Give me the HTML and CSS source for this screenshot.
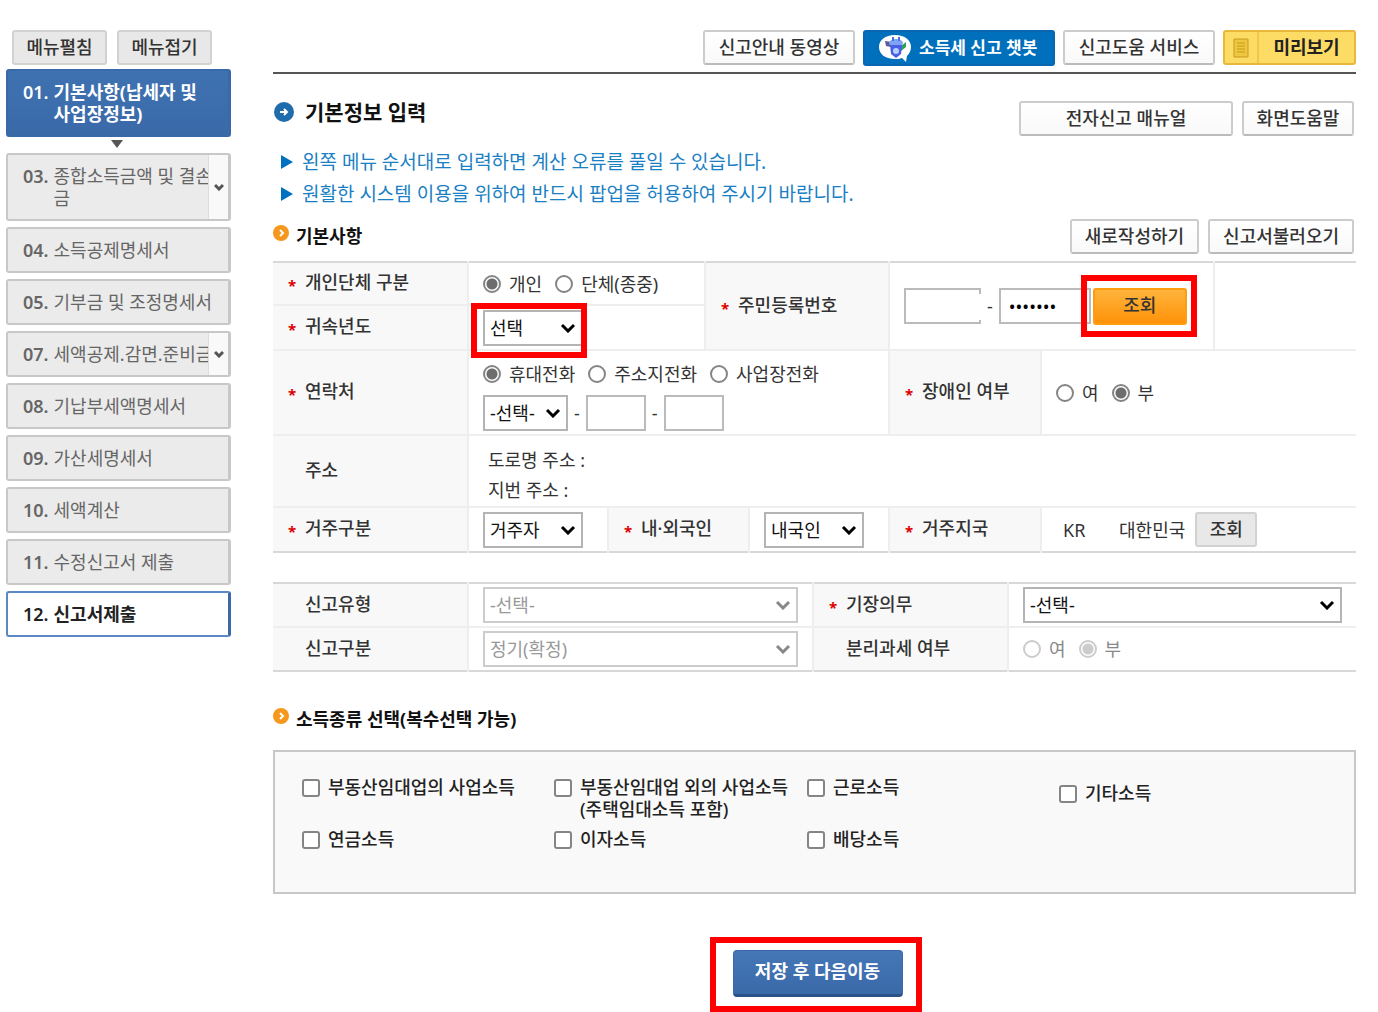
FILE: index.html
```html
<!DOCTYPE html>
<html lang="ko">
<head>
<meta charset="utf-8">
<meta name="viewport" content="width=device-width, initial-scale=1">
<title>기본정보 입력</title>
<link rel="stylesheet" href="styles.css">
</head>
<body>
<div class="page">
  <nav class="side" aria-label="신고 메뉴">
    <div class="side-tools">
      <button type="button" class="btn btn-flat">메뉴펼침</button>
      <button type="button" class="btn btn-flat">메뉴접기</button>
    </div>
    <a href="#" class="step step-current"><b>01.</b><span class="step-name">기본사항(납세자 및<br>사업장정보)</span></a>
    <svg class="step-arrow" viewBox="0 0 12 8" aria-hidden="true"><path d="M0 0h12L6 8z"/></svg>
    <ul class="steps">
      <li><a href="#" class="step step-tall"><b>03.</b><span class="step-name">종합소득금액 및 결손<br>금</span><span class="step-more"><svg viewBox="0 0 10 8" aria-hidden="true"><path d="M1 2l4 4 4-4"/></svg></span></a></li>
      <li><a href="#" class="step"><b>04.</b><span class="step-name">소득공제명세서</span></a></li>
      <li><a href="#" class="step"><b>05.</b><span class="step-name">기부금 및 조정명세서</span></a></li>
      <li><a href="#" class="step"><b>07.</b><span class="step-name">세액공제.감면.준비금</span><span class="step-more"><svg viewBox="0 0 10 8" aria-hidden="true"><path d="M1 2l4 4 4-4"/></svg></span></a></li>
      <li><a href="#" class="step"><b>08.</b><span class="step-name">기납부세액명세서</span></a></li>
      <li><a href="#" class="step"><b>09.</b><span class="step-name">가산세명세서</span></a></li>
      <li><a href="#" class="step"><b>10.</b><span class="step-name">세액계산</span></a></li>
      <li><a href="#" class="step"><b>11.</b><span class="step-name">수정신고서 제출</span></a></li>
      <li><a href="#" class="step step-last"><b>12.</b><span class="step-name">신고서제출</span></a></li>
    </ul>
  </nav>

  <main class="main">
    <header class="topbar">
      <button type="button" class="btn btn-top">신고안내 동영상</button>
      <button type="button" class="btn btn-bot">
        <svg class="bot" viewBox="0 0 36 32" aria-hidden="true">
          <path fill="#fff" d="M18 3c10 0 16 5 16 12 0 4-2 7-4 9l-1 6-4-4c-2 1-4 1-7 1C8 27 2 22 2 15S8 3 18 3z"/>
          <path fill="#5a5a9c" d="M8 9l7 1-1 5-5-1z"/>
          <path fill="#2e9e5b" d="M29 10l-6 5 1 4 5-4z"/>
          <ellipse cx="19" cy="11" rx="7" ry="4" fill="#7fa4f4"/>
          <path fill="#4a5fe8" d="M13 13h12l-1 9-5 4-5-4z"/>
          <circle cx="19" cy="19" r="3" fill="#b5d0ff"/>
          <path stroke="#4a6fe1" stroke-width="2" d="M16 9V5M22 9V5"/>
        </svg>
        <span>소득세 신고 챗봇</span>
      </button>
      <button type="button" class="btn btn-top">신고도움 서비스</button>
      <button type="button" class="btn btn-preview">
        <span class="preview-icon"><svg viewBox="0 0 16 20" aria-hidden="true"><path d="M1 1h14v18H1zM4 5h8M4 8h8M4 11h8M4 14h8"/></svg></span>
        <span class="preview-text">미리보기</span>
      </button>
    </header>

    <div class="title-row">
      <h1 class="title"><svg class="title-icon" viewBox="0 0 22 22" aria-hidden="true"><circle cx="11" cy="11" r="10"/><path d="M7 11h7M11 8l3 3-3 3"/></svg>기본정보 입력</h1>
      <div class="actions">
        <button type="button" class="btn btn-manual">전자신고 매뉴얼</button>
        <button type="button" class="btn btn-help">화면도움말</button>
      </div>
    </div>

    <ul class="notes">
      <li><svg viewBox="0 0 12 14" aria-hidden="true"><path d="M0 0l12 7-12 7z"/></svg>왼쪽 메뉴 순서대로 입력하면 계산 오류를 풀일 수 있습니다.</li>
      <li><svg viewBox="0 0 12 14" aria-hidden="true"><path d="M0 0l12 7-12 7z"/></svg>원활한 시스템 이용을 위하여 반드시 팝업을 허용하여 주시기 바랍니다.</li>
    </ul>

    <div class="section-row">
      <h2 class="section"><svg class="dot" viewBox="0 0 16 16" aria-hidden="true"><circle cx="8" cy="8" r="8"/><path d="M7 5l3 3-3 3"/></svg>기본사항</h2>
      <div class="actions">
        <button type="button" class="btn btn-wide">새로작성하기</button>
        <button type="button" class="btn btn-wide">신고서불러오기</button>
      </div>
    </div>

    <table class="form">
      <colgroup><col class="c195"><col class="c140"><col class="c97"><col class="c44"><col class="c140"><col class="c152"><col class="c173"><col></colgroup>
      <tr class="r43">
        <th scope="row" class="req">개인단체 구분</th>
        <td colspan="2"><div class="line">
          <label class="opt"><input type="radio" name="kind" checked>개인</label>
          <label class="opt"><input type="radio" name="kind">단체(종중)</label></div></td>
        <th scope="row" class="req" colspan="2" rowspan="2">주민등록번호</th>
        <td colspan="2" rowspan="2"><div class="line line-id">
          <span class="open-box"><input type="text" class="box" aria-label="주민등록번호 앞자리"></span>
          <span class="dash">-</span>
          <input type="password" class="box box-pw" value="0000000" aria-label="주민등록번호 뒷자리">
          <span class="mark mark-search"><button type="button" class="btn btn-orange">조회</button></span></div></td>
        <td rowspan="2"></td>
      </tr>
      <tr class="r45">
        <th scope="row" class="req"><label for="year">귀속년도</label></th>
        <td colspan="2"><span class="mark mark-year"><select id="year" class="sel w100"><option>선택</option></select></span></td>
      </tr>
      <tr class="r85">
        <th scope="row" class="req">연락처</th>
        <td colspan="4"><div class="stack">
          <div class="line">
            <label class="opt"><input type="radio" name="tel" checked>휴대전화</label>
            <label class="opt"><input type="radio" name="tel">주소지전화</label>
            <label class="opt"><input type="radio" name="tel">사업장전화</label>
          </div>
          <div class="line line-tel">
            <select class="sel w85" aria-label="전화 앞자리"><option>-선택-</option></select><span class="dash">-</span>
            <input type="text" class="box box-tel" aria-label="전화 가운데자리"><span class="dash">-</span>
            <input type="text" class="box box-tel" aria-label="전화 끝자리">
          </div></div></td>
        <th scope="row" class="req">장애인 여부</th>
        <td colspan="2"><div class="line">
          <label class="opt"><input type="radio" name="dis">여</label>
          <label class="opt"><input type="radio" name="dis" checked>부</label></div></td>
      </tr>
      <tr class="r72">
        <th scope="row">주소</th>
        <td colspan="7" class="address">도로명 주소 :<br>지번 주소 :</td>
      </tr>
      <tr class="r45">
        <th scope="row" class="req"><label for="resident">거주구분</label></th>
        <td><select id="resident" class="sel w100"><option>거주자</option></select></td>
        <th scope="row" class="req" colspan="2"><label for="national">내·외국인</label></th>
        <td><select id="national" class="sel w100"><option>내국인</option></select></td>
        <th scope="row" class="req">거주지국</th>
        <td colspan="2"><div class="line country"><span class="code">KR</span><span class="nation">대한민국</span><button type="button" class="btn btn-flat btn-small">조회</button></div></td>
      </tr>
    </table>

    <table class="form form-type">
      <colgroup><col class="c195"><col class="c345"><col class="c195"><col></colgroup>
      <tr class="r44">
        <th scope="row"><label for="rtype">신고유형</label></th>
        <td><select id="rtype" class="sel full" disabled><option>-선택-</option></select></td>
        <th scope="row" class="req"><label for="book">기장의무</label></th>
        <td><select id="book" class="sel full"><option>-선택-</option></select></td>
      </tr>
      <tr class="r44">
        <th scope="row"><label for="rdiv">신고구분</label></th>
        <td><select id="rdiv" class="sel full" disabled><option>정기(확정)</option></select></td>
        <th scope="row">분리과세 여부</th>
        <td><div class="line">
          <label class="opt opt-off"><input type="radio" name="sep" disabled>여</label>
          <label class="opt opt-off"><input type="radio" name="sep" checked disabled>부</label></div></td>
      </tr>
    </table>

    <h2 class="section section-income"><svg class="dot" viewBox="0 0 16 16" aria-hidden="true"><circle cx="8" cy="8" r="8"/><path d="M7 5l3 3-3 3"/></svg>소득종류 선택(복수선택 가능)</h2>
    <div class="income">
      <label class="chk"><input type="checkbox"><span>부동산임대업의 사업소득</span></label>
      <label class="chk"><input type="checkbox"><span>부동산임대업 외의 사업소득<br>(주택임대소득 포함)</span></label>
      <label class="chk"><input type="checkbox"><span>근로소득</span></label>
      <label class="chk chk-etc"><input type="checkbox"><span>기타소득</span></label>
      <label class="chk"><input type="checkbox"><span>연금소득</span></label>
      <label class="chk"><input type="checkbox"><span>이자소득</span></label>
      <label class="chk"><input type="checkbox"><span>배당소득</span></label>
    </div>

    <div class="submit"><span class="mark mark-save"><button type="submit" class="btn-save">저장 후 다음이동</button></span></div>
  </main>
</div>
</body>
</html>
```
FILE: styles.css
```css
* { box-sizing: border-box; }
body {
  margin: 0;
  background: #fff;
  color: #333;
  font: 18px/22px "Noto Sans", "Noto Sans CJK KR", sans-serif;
}
ul { list-style: none; margin: 0; padding: 0; }
h1, h2 { margin: 0; }
button, input, select { font: inherit; color: inherit; margin: 0; }
a { color: inherit; text-decoration: none; }

.page { display: flex; gap: 42px; padding: 30px 22px 0 6px; }

/* side menu */
.side { flex: 0 0 225px; }
.side-tools { display: flex; gap: 10px; padding: 0 6px; margin-bottom: 4px; }
.steps { display: flex; flex-direction: column; gap: 6px; }
.step {
  position: relative;
  display: flex;
  gap: 5px;
  min-height: 46px;
  padding: 10px 0 10px 15px;
  overflow: hidden;
  border: 2px solid #c8c8c8;
  border-right-width: 3px;
  border-radius: 3px;
  background: #ebebeb;
  color: #666;
  white-space: nowrap;
}
.step b { font-weight: 600; }
.step-tall { min-height: 68px; }
.step-current {
  min-height: 68px;
  border-color: #3a69a8;
  background: linear-gradient(#3f72b1, #3a69a8);
  color: #fff;
  font-weight: 700;
}
.step-last { border-color: #5b88c4; border-right-color: #3a69a8; background: #fff; color: #222; font-weight: 700; }
.step-arrow { display: block; width: 12px; height: 8px; margin: 3px auto 5px 105px; fill: #555; }
.step-more {
  position: absolute;
  inset: 0 0 0 auto;
  width: 20px;
  display: flex;
  align-items: center;
  justify-content: center;
  border-left: 1px solid #ddd;
  background: #f9f9f9;
}
.step-more svg { width: 10px; height: 8px; fill: none; stroke: #555; stroke-width: 3; }

/* buttons */
.btn {
  height: 35px;
  padding: 0 9px 2px;
  border: 2px solid #ccc;
  border-bottom-color: #bbb;
  border-radius: 3px;
  background: linear-gradient(#fff, #f9f9f9);
  color: #333;
  font-weight: 500;
  white-space: nowrap;
}
.btn-flat { width: 95px; border-color: #d2d2d2; background: #e8e8e8; }
.btn-small { width: 62px; }
.btn-top { width: 152px; }
.btn-bot {
  display: flex;
  align-items: center;
  gap: 6px;
  width: 192px;
  height: 36px;
  padding: 0 12px;
  border-color: #0a66b0;
  background: #0070bc;
  color: #fff;
  font-size: 17px;
  font-weight: 700;
}
.bot { width: 36px; height: 32px; }
.btn-preview {
  display: flex;
  width: 133px;
  padding: 0;
  border-color: #e8b83a;
  background: #fddc66;
  color: #222;
  font-weight: 700;
}
.preview-icon { display: flex; align-items: center; justify-content: center; width: 34px; height: 31px; border-right: 2px solid #f3c64a; }
.preview-icon svg { width: 16px; height: 20px; fill: #efc640; stroke: #c79a1c; stroke-width: 1; }
.preview-text { flex: 1; line-height: 30px; }
.btn-manual { width: 214px; }
.btn-help { width: 112px; }
.btn-wide { padding: 0 13px 2px; }
.btn-orange { width: 94px; height: 37px; border-color: #ff9c10; background: linear-gradient(#ffb43c, #ff920a); }

/* main column */
.main { flex: 1; min-width: 0; }
.topbar { display: flex; justify-content: flex-end; gap: 8px; height: 44px; border-bottom: 2px solid #555; }
.title-row, .section-row { display: flex; justify-content: space-between; padding-right: 2px; }
.title-row { margin-top: 27px; }
.title { display: flex; align-items: center; gap: 10px; height: 22px; color: #111; font-size: 21px; font-weight: 700; }
.title-icon { width: 22px; height: 22px; fill: #1e6cac; }
.title-icon path { fill: none; stroke: #fff; stroke-width: 2; }
.actions { display: flex; gap: 9px; }
.notes { margin-top: 10px; color: #1b7fc4; font-size: 19px; line-height: 32px; }
.notes li { display: flex; align-items: center; gap: 9px; padding-left: 8px; white-space: nowrap; }
.notes svg { width: 12px; height: 14px; fill: #0070c0; }
.section-row { margin: 9px 0 7px; }
.section { display: flex; align-items: flex-start; gap: 7px; color: #111; font-size: 18px; font-weight: 700; line-height: 34px; }
.dot { width: 16px; height: 16px; margin-top: 6px; fill: #f6981d; }
.dot path { fill: none; stroke: #fff; stroke-width: 2; }

/* form tables */
.form {
  width: 100%;
  table-layout: fixed;
  border-collapse: collapse;
  border-top: 2px solid #d8d8d8;
  border-bottom: 2px solid #d8d8d8;
}
.form-type { margin-top: 29px; }
.c195 { width: 195px; } .c140 { width: 140px; } .c97 { width: 97px; } .c44 { width: 44px; }
.c152 { width: 152px; } .c173 { width: 173px; } .c345 { width: 345px; }
.r43 { height: 43px; } .r44 { height: 44px; } .r45 { height: 45px; } .r72 { height: 72px; } .r85 { height: 85px; }
.form th, .form td { padding: 0 14px; border: 2px solid #eee; border-width: 2px 0 0 2px; text-align: left; white-space: nowrap; }
.form th:first-child { border-left: 0; }
.form tr:first-child > * { border-top: 0; }
.form th { padding: 0 0 3px 32px; background: #f8f8f8; font-weight: 500; }
.form th.req { padding-left: 15px; }
.form th.req::before { content: "*"; display: inline-block; width: 17px; color: #d00; font-size: 15px; font-weight: 700; line-height: 16px; vertical-align: -2px; }
.form td.address { padding-top: 8px; padding-left: 19px; line-height: 30px; }
.line { display: flex; align-items: center; }
.line .opt + .opt { margin-left: 13px; }
.stack { display: flex; flex-direction: column; gap: 10px; padding-top: 8px; }
.line-tel, .line-id { gap: 6px; }
.dash { line-height: 30px; }
.opt { display: flex; align-items: center; gap: 8px; }
.opt-off { color: #888; }
input[type="radio"] {
  appearance: none;
  width: 18px;
  height: 18px;
  border: 2px solid #858585;
  border-radius: 50%;
  background: #fff;
}
input[type="radio"]:checked { background: radial-gradient(circle, #6d6d6d 5px, #fff 6px); }
input[type="radio"]:disabled { border-color: #ccc; }
input[type="radio"]:checked:disabled { background: radial-gradient(circle, #ccc 5px, #fff 6px); }
.box { display: block; width: 77px; height: 36px; padding: 0 8px; border: 2px solid #bbb; background: #fff; }
.box-tel { width: 60px; }
.box-pw { width: 92px; color: #000; }
.open-box { position: relative; }
.open-box::after { content: ""; position: absolute; inset: 6px 0 4px auto; width: 2px; background: #fff; }
.line-id .btn { display: block; }
.line-id .mark { margin-left: -4px; }
.sel {
  appearance: none;
  display: block;
  height: 36px;
  padding: 0 24px 0 5px;
  border: 2px solid #b4b4b4;
  border-radius: 0;
  background: #fff url("data:image/svg+xml,%3Csvg xmlns='http://www.w3.org/2000/svg' width='16' height='10'%3E%3Cpath d='M2 2l6 6 6-6' fill='none' stroke='%23000' stroke-width='3'/%3E%3C/svg%3E") no-repeat right 5px center;
  color: #111;
}
.sel:disabled {
  border-color: #ccc;
  background-image: url("data:image/svg+xml,%3Csvg xmlns='http://www.w3.org/2000/svg' width='16' height='10'%3E%3Cpath d='M2 2l6 6 6-6' fill='none' stroke='%23888' stroke-width='3'/%3E%3C/svg%3E");
  color: #999;
  opacity: 1;
}
.w100 { width: 100px; }
.w85 { width: 85px; }
.full { width: 100%; }
.country { padding-left: 7px; }
.code { width: 56px; }
.nation { margin-right: 10px; }

/* highlight frames */
.mark { position: relative; display: inline-block; vertical-align: top; }
.mark::after { content: ""; position: absolute; border: 6px solid #f00; pointer-events: none; }
.mark-year::after { inset: -7px -4px -12px -12px; }
.mark-search::after { inset: -13px -10px -12px -12px; }
.mark-save::after { inset: -13px -19px -15px -23px; }

/* income kinds */
.section-income { margin-top: 30px; }
.income {
  display: grid;
  grid-template-columns: 252px 253px 252px 1fr;
  align-content: start;
  row-gap: 8px;
  min-height: 144px;
  margin-top: 14px;
  padding: 24px 27px;
  border: 2px solid #c8c8c8;
  background: #f9f9f9;
  color: #222;
  font-weight: 500;
}
.chk { display: flex; align-items: flex-start; gap: 8px; white-space: nowrap; }
.chk-etc { padding-top: 6px; }
input[type="checkbox"] {
  appearance: none;
  flex: none;
  width: 18px;
  height: 18px;
  margin-top: 3px;
  border: 2px solid #858585;
  border-radius: 3px;
  background: #fff;
}
.submit { display: flex; justify-content: center; margin-top: 56px; padding: 0 0 15px 6px; }
.btn-save {
  display: block;
  width: 170px;
  height: 47px;
  padding: 0 0 3px;
  border: 1px solid #3a69a8;
  border-bottom: 3px solid #2b5288;
  border-radius: 4px;
  background: linear-gradient(#4577b7, #3a69a8);
  color: #fff;
  font-weight: 700;
}
```
